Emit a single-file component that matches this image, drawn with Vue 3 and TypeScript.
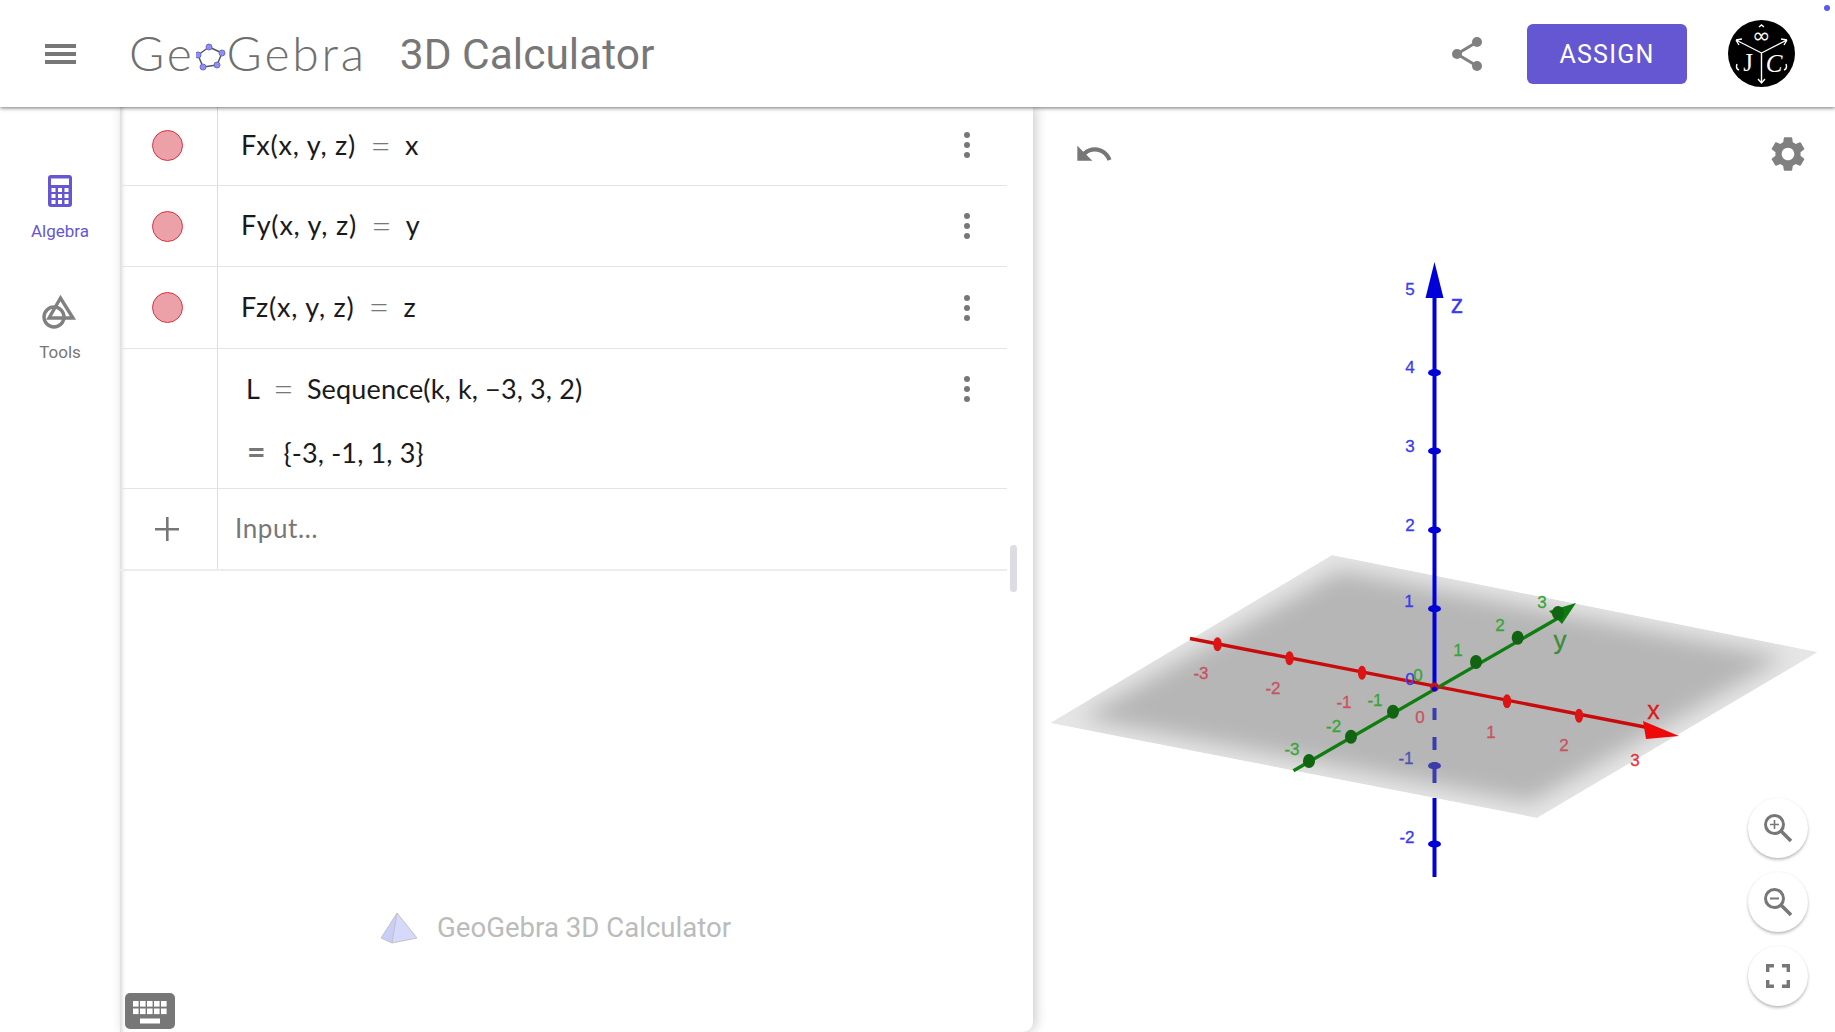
<template>
  <div class="app">
    <header class="topbar">
      <svg class="menu-icon" viewBox="0 0 31 20"><path d="M0 0h31v4H0zM0 8h31v4H0zM0 16h31v4H0z" /></svg>
      <div class="logo">
        <span>Ge</span>
        <svg class="logo-mark" viewBox="0 0 30 34">
          <polygon points="13,7 26,13 21,25 7,27 2,15" fill="none" stroke="#555" stroke-width="1.5" stroke-linejoin="round" />
          <circle v-for="(p, i) in logoDots" :key="i" :cx="p[0]" :cy="p[1]" r="3" fill="#8f8ff0" stroke="#6a6ad0" />
        </svg>
        <span>Gebra</span>
      </div>
      <div class="title">3D Calculator</div>
      <div class="spacer"></div>
      <svg class="share-icon" viewBox="0 0 30 34">
        <path d="M25 5 5 17l20 12" fill="none" stroke="#808080" stroke-width="3" />
        <circle cx="25" cy="5" r="5" /><circle cx="5" cy="17" r="5" /><circle cx="25" cy="29" r="5" />
      </svg>
      <button class="assign">ASSIGN</button>
      <svg class="avatar" viewBox="0 0 67 67">
        <circle cx="33.5" cy="33.5" r="33.5" fill="#000" />
        <path d="M33.5 33 8 20M33.5 33 59 20M33.5 33v30M8 20l6-1M8 20l3 5M59 20l-6-1M59 20l-3 5M30 59l3.5 4 3.5-4M31 7l2.5-2 2.5 2M9 44c-1 3-1 5 2 6M58 44c1 3 1 5-2 6" fill="none" stroke="#fff" stroke-width="1.4" />
        <text x="33.5" y="23" class="avatar-inf">∞</text>
        <text x="20" y="51" class="avatar-letter">J</text>
        <text x="46" y="52" class="avatar-letter italic">C</text>
      </svg>
      <i class="corner-dot"></i>
    </header>

    <div class="body">
      <nav class="sidebar">
        <div class="nav-item active">
          <svg class="calc-icon" viewBox="0 0 24 32">
            <rect width="24" height="32" rx="3" fill="#6557d2" />
            <rect x="3" y="3.5" width="18" height="6.5" fill="#fff" />
            <template v-for="r in 3" :key="r">
              <rect v-for="c in 3" :key="c" :x="c * 6.5 - 3" :y="r * 6 + 7" width="4" height="4" fill="#fff" />
            </template>
          </svg>
          <span>Algebra</span>
        </div>
        <div class="nav-item">
          <svg class="tools-icon" viewBox="0 0 40 40" fill="none" stroke="#808080" stroke-width="3.4">
            <polygon points="20.5,5 9,25 33,25" />
            <circle cx="14" cy="24" r="10" />
          </svg>
          <span>Tools</span>
        </div>
      </nav>

      <section class="algebra">
        <div class="list">
          <div v-for="row in rows" :key="row.name" class="row">
            <div class="marble-cell"><i class="marble"></i></div>
            <div class="math">
              {{ row.name }}<span class="eq">=</span>{{ row.value }}
            </div>
            <svg class="more" viewBox="0 0 6 26"><circle cx="3" cy="3" r="3" /><circle cx="3" cy="13" r="3" /><circle cx="3" cy="23" r="3" /></svg>
          </div>
          <div class="row row-tall">
            <div class="marble-cell"></div>
            <div class="math-tall">
              <div class="math-line">L<span class="eq">=</span>Sequence(k, k, −3, 3, 2)</div>
              <div class="math-line result"><span class="eq eq-bold">=</span>{-3, -1, 1, 3}</div>
            </div>
            <svg class="more more-tall" viewBox="0 0 6 26"><circle cx="3" cy="3" r="3" /><circle cx="3" cy="13" r="3" /><circle cx="3" cy="23" r="3" /></svg>
          </div>
          <div class="row row-input">
            <div class="marble-cell">
              <svg class="plus" viewBox="0 0 24 24"><path d="M11 0h2.6v11H24v2.6H13.6V24H11V13.6H0V11h11z" /></svg>
            </div>
            <div class="input-hint">Input…</div>
          </div>
        </div>
        <i class="scrollbar"></i>
        <div class="watermark">
          <svg class="pyramid" viewBox="0 0 36 32">
            <polygon points="16,1 0,26 11,31" fill="#c9cdf9" stroke="#c4c4c4" />
            <polygon points="16,1 36,26 11,31" fill="#d6d9fc" stroke="#c4c4c4" />
          </svg>
          <span>GeoGebra 3D Calculator</span>
        </div>
        <div class="keyboard">
          <svg viewBox="0 0 50 36" fill="#fff">
            <template v-for="y in [8, 15.5]" :key="y">
              <rect v-for="k in 5" :key="k" :x="1 + k * 7" :y="y" width="5.6" height="5.6" />
            </template>
            <rect x="15" y="25.5" width="20" height="5" />
          </svg>
        </div>
      </section>

      <main class="graphics">
        <svg class="plot" viewBox="1033 107 802 925">
          <defs>
            <clipPath id="plane-clip"><polygon points="1332,555 1818,652 1537,818 1050,723" /></clipPath>
            <filter id="plane-blur" x="-10%" y="-10%" width="120%" height="120%"><feGaussianBlur stdDeviation="11" /></filter>
          </defs>
          <g clip-path="url(#plane-clip)">
            <polygon points="1332,555 1818,652 1537,818 1050,723" fill="#e6e6e6" />
            <polygon points="1340,570 1785,657 1530,803 1080,718" fill="#b6b6b6" filter="url(#plane-blur)" />
          </g>
          <path d="M1434.5 687V798" stroke="#3c3cab" stroke-width="4" stroke-dasharray="0 21 12 17 13 12 21 12" fill="none" />
          <line x1="1190" y1="638.5" x2="1650" y2="728" stroke="#c80c0c" stroke-width="3.4" />
          <polygon points="1643,721 1646,739 1679,736" fill="#ee0808" />
          <ellipse v-for="(p, i) in xTicks" :key="i" :cx="p[0]" :cy="p[1]" rx="4.2" ry="7" fill="#dc1414" />
          <line x1="1293.5" y1="770.7" x2="1560" y2="617" stroke="#107d10" stroke-width="3.4" />
          <polygon points="1549,611 1562,624 1576,603" fill="#0f7a0f" />
          <ellipse v-for="(p, i) in yTicks" :key="i" :cx="p[0]" :cy="p[1]" rx="6" ry="7" fill="#116411" />
          <line x1="1434.5" y1="798" x2="1434.5" y2="877" stroke="#0000d8" stroke-width="4" />
          <line x1="1434.5" y1="295" x2="1434.5" y2="687" stroke="#0000d8" stroke-width="4" />
          <polygon points="1434.5,262 1425.5,298 1443.5,298" fill="#0000d8" />
          <ellipse v-for="y in zTicks" :key="y" cx="1434.5" :cy="y" rx="6.5" ry="3.6" :fill="y === 765.7 ? '#3c3cab' : '#0000d8'" />
          <circle cx="1434.5" cy="687" r="4.5" fill="#c01818" />
          <circle cx="1434.5" cy="689" r="2.5" fill="#0000d8" />
          <text v-for="l in labels" :key="l.x + ',' + l.y" :x="l.x" :y="l.y" :fill="l.color" :stroke="l.color" :font-size="l.size" class="plot-label">{{ l.text }}</text>
        </svg>

        <svg class="undo" viewBox="0 0 24 24"><path d="M12.5 8c-2.65 0-5.05.99-6.9 2.6L2 7v9h9l-3.62-3.62c1.39-1.16 3.16-1.88 5.12-1.88 3.54 0 6.55 2.31 7.6 5.5l2.37-.78C21.08 11.03 17.15 8 12.5 8z" /></svg>
        <svg class="gear" viewBox="0 0 24 24"><path d="M19.14 12.94c.04-.3.06-.61.06-.94 0-.32-.02-.64-.07-.94l2.03-1.58a.49.49 0 0 0 .12-.61l-1.92-3.32a.488.488 0 0 0-.59-.22l-2.39.96c-.5-.38-1.03-.7-1.62-.94l-.36-2.54a.484.484 0 0 0-.48-.41h-3.84c-.24 0-.43.17-.47.41l-.36 2.54c-.59.24-1.13.57-1.62.94l-2.39-.96c-.22-.08-.47 0-.59.22L2.74 8.87c-.12.21-.08.47.12.61l2.03 1.58c-.05.3-.09.63-.09.94s.02.64.07.94l-2.03 1.58a.49.49 0 0 0-.12.61l1.92 3.32c.12.22.37.29.59.22l2.39-.96c.5.38 1.03.7 1.62.94l.36 2.54c.05.24.24.41.48.41h3.84c.24 0 .44-.17.47-.41l.36-2.54c.59-.24 1.13-.56 1.62-.94l2.39.96c.22.08.47 0 .59-.22l1.92-3.32c.12-.22.07-.47-.12-.61l-2.01-1.58zM12 15.6c-1.98 0-3.6-1.62-3.6-3.6s1.62-3.6 3.6-3.6 3.6 1.62 3.6 3.6-1.62 3.6-3.6 3.6z" /></svg>

        <div class="zoom-buttons">
          <button class="round">
            <svg viewBox="0 0 30 30" fill="none" stroke="#777" stroke-width="3">
              <circle cx="11.5" cy="11.5" r="9" /><path d="M18 18l10 10" stroke-width="3.6" /><path d="M11.5 7v9M7 11.5h9" stroke-width="1.6" />
            </svg>
          </button>
          <button class="round">
            <svg viewBox="0 0 30 30" fill="none" stroke="#777" stroke-width="3">
              <circle cx="11.5" cy="11.5" r="9" /><path d="M18 18l10 10" stroke-width="3.6" /><path d="M7 11.5h9" stroke-width="2" />
            </svg>
          </button>
          <button class="round">
            <svg viewBox="0 0 24 24" fill="#777"><path d="M0 0h8v3.4H3.4V8H0zM16 0h8v8h-3.4V3.4H16zM0 16h3.4v4.6H8V24H0zM20.6 16H24v8h-8v-3.4h4.6z" /></svg>
          </button>
        </div>
      </main>
    </div>
  </div>
</template>

<script setup lang="ts">
interface PlotLabel {
  text: string;
  x: number;
  y: number;
  color: string;
  size: number;
}

const rows = [
  { name: 'Fx(x, y, z)', value: 'x' },
  { name: 'Fy(x, y, z)', value: 'y' },
  { name: 'Fz(x, y, z)', value: 'z' },
];

const logoDots = [
  [13, 7],
  [26, 13],
  [21, 25],
  [7, 27],
  [2, 15],
];

const xTicks = [
  [1217.5, 644.3],
  [1289.5, 658.3],
  [1362, 672.7],
  [1507, 701.3],
  [1579, 715.7],
];
const yTicks = [
  [1309, 761],
  [1351, 736.7],
  [1393, 711.7],
  [1476, 662],
  [1517.7, 637.7],
  [1558, 613],
];
const zTicks = [372.7, 451, 530, 608.7, 765.7, 844];

const RED = '#c9525f';
const GREEN = '#37a537';
const BLUE = '#3a3af0';

function mk(text: string, x: number, y: number, color: string, size = 17): PlotLabel {
  return { text, x, y, color, size };
}

const labels: PlotLabel[] = [
  mk('5', 1410, 289, BLUE),
  mk('4', 1410, 367, BLUE),
  mk('3', 1410, 446, BLUE),
  mk('2', 1410, 525, BLUE),
  mk('1', 1409, 601, BLUE),
  mk('0', 1410, 679, BLUE),
  mk('-1', 1406, 758, '#5050b8'),
  mk('-2', 1407, 837, BLUE),
  mk('z', 1457, 304, BLUE, 25),
  mk('-3', 1201, 673, RED),
  mk('-2', 1273, 688, RED),
  mk('-1', 1344, 702, RED),
  mk('0', 1420, 717, RED),
  mk('1', 1491, 732, RED),
  mk('2', 1564, 745, RED),
  mk('3', 1635, 760, '#e8303c'),
  mk('x', 1653.6, 710, '#e01818', 25),
  mk('-3', 1292, 749, GREEN),
  mk('-2', 1333.6, 726, GREEN),
  mk('-1', 1375, 700, GREEN),
  mk('0', 1418, 675, GREEN),
  mk('1', 1458, 650, GREEN),
  mk('2', 1500, 625, GREEN),
  mk('3', 1542, 602, GREEN),
  mk('y', 1560, 640, '#3c8c3c', 26),
];
</script>

<style>
html,
body {
  margin: 0;
  height: 100%;
  background: #fff;
  overflow: hidden;
}
</style>

<style scoped>
.app {
  width: 1835px;
  height: 1032px;
  display: flex;
  flex-direction: column;
  font-family: Roboto, "Liberation Sans", sans-serif;
  color: #777;
  overflow: hidden;
}

.topbar {
  position: relative;
  z-index: 3;
  flex: 0 0 107px;
  display: flex;
  align-items: center;
  background: #fff;
  box-shadow: 0 1px 4px rgba(0, 0, 0, 0.55);
}

.menu-icon {
  width: 31px;
  height: 20px;
  margin-left: 45px;
  fill: #777;
}

.logo {
  display: flex;
  align-items: center;
  margin: -2px 0 0 53px;
  font-family: Lato, sans-serif;
  font-weight: 300;
  font-size: 48px;
  letter-spacing: 2.8px;
  color: #6f6f6f;
}

.logo-mark {
  width: 30px;
  height: 34px;
  margin: 9px 1px 0 1px;
}

.title {
  margin: 2px 0 0 33px;
  font-size: 42.5px;
  color: #777;
}

.spacer {
  flex: 1;
}

.share-icon {
  width: 30px;
  height: 34px;
  fill: #808080;
}

.assign {
  width: 160px;
  height: 60px;
  margin-left: 45px;
  padding: 2px 0 0;
  border: 0;
  border-radius: 6px;
  background: #6557d2;
  color: #fff;
  font-family: Roboto, sans-serif;
  font-weight: 400;
  font-size: 25px;
  letter-spacing: 1.2px;
}

.avatar {
  width: 67px;
  height: 67px;
  margin-left: 41px;
  margin-right: 40px;
}

.avatar-inf {
  fill: #fff;
  font-size: 22px;
  text-anchor: middle;
  font-family: "DejaVu Sans", sans-serif;
}

.avatar-letter {
  fill: #fff;
  font-family: "Liberation Serif", serif;
  font-size: 25px;
  text-anchor: middle;
}

.italic {
  font-style: italic;
}

.corner-dot {
  position: absolute;
  right: 5px;
  top: 5px;
  width: 6px;
  height: 6px;
  border-radius: 50%;
  background: #5a5af0;
}

.body {
  flex: 1;
  display: flex;
  min-height: 0;
}

.sidebar {
  flex: 0 0 120px;
  display: flex;
  flex-direction: column;
  align-items: center;
  padding-top: 68px;
  gap: 52px;
  box-sizing: border-box;
}

.nav-item {
  display: flex;
  flex-direction: column;
  align-items: center;
  gap: 14px;
  font-size: 17px;
  color: #777;
}

.nav-item.active {
  color: #6557d2;
}

.calc-icon {
  width: 24px;
  height: 32px;
}

.tools-icon {
  width: 40px;
  height: 40px;
  margin-bottom: -5px;
}

.algebra {
  position: relative;
  z-index: 2;
  flex: 0 0 913px;
  box-sizing: border-box;
  padding-right: 26px;
  background: #fff;
  border-bottom-right-radius: 10px;
  box-shadow: 3px 0 12px rgba(0, 0, 0, 0.2), inset 5px 0 4px -3px rgba(0, 0, 0, 0.16);
}

.list {
  display: flex;
  flex-direction: column;
}

.row {
  display: flex;
  height: 81px;
  border-bottom: 1px solid #e4e4e4;
  box-sizing: border-box;
}

.row:nth-child(1) {
  height: 79px;
}

.row:nth-child(1) .more,
.row:nth-child(1) .marble {
  margin-bottom: 2px;
}

.row:nth-child(3) {
  height: 82px;
}

.row-tall {
  height: 140px;
}

.row.row-input {
  height: 82px;
  border-bottom: 2px solid #ececec;
}

.marble-cell {
  flex: 0 0 98px;
  display: flex;
  align-items: center;
  justify-content: center;
  padding-right: 3px;
  border-right: 1px solid #dcdcdc;
  box-sizing: border-box;
}

.marble {
  width: 31px;
  height: 31px;
  border-radius: 50%;
  background: #eca1a9;
  border: 1.5px solid #d8333f;
  box-sizing: border-box;
}

.math,
.math-line {
  font-family: Lato, "Open Sans", sans-serif;
  font-size: 27px;
  color: #1a1a1a;
  white-space: nowrap;
}

.math {
  flex: 1;
  display: flex;
  align-items: center;
  padding: 0 0 3px 23px;
  letter-spacing: 0.8px;
}

.eq {
  margin: 0 14px 0 14px;
  font-size: 36px;
  font-weight: 300;
  line-height: 1;
  color: #777;
  letter-spacing: 0;
}

.more {
  align-self: center;
  width: 6px;
  height: 26px;
  margin-right: 37px;
  fill: #777;
}

.more-tall {
  align-self: flex-start;
  margin-top: 27px;
}

.math-tall {
  flex: 1;
  display: flex;
  flex-direction: column;
  gap: 23px;
  padding: 19px 0 0 28px;
}

.math-line {
  line-height: 41px;
  letter-spacing: 0.15px;
}

.math-line .eq {
  margin: 0 13px;
  vertical-align: -3px;
}

.math-line.result .eq-bold {
  margin: 0 18px 0 1px;
  font-size: 32px;
  font-weight: 700;
  vertical-align: -1px;
}

.plus {
  width: 24px;
  height: 24px;
  fill: #777;
}

.input-hint {
  align-self: center;
  padding: 0 0 2px 17px;
  font-family: Lato, sans-serif;
  font-size: 26px;
  letter-spacing: 0.6px;
  color: #777;
}

.scrollbar {
  position: absolute;
  left: 890px;
  top: 438px;
  width: 7px;
  height: 47px;
  border-radius: 4px;
  background: #dcdce2;
}

.watermark {
  position: absolute;
  left: 261px;
  top: 804px;
  display: flex;
  align-items: center;
  gap: 20px;
  font-size: 27.6px;
  color: #bbb;
}

.pyramid {
  width: 36px;
  height: 32px;
}

.keyboard {
  position: absolute;
  left: 5px;
  bottom: 3px;
  width: 50px;
  height: 36px;
  border-radius: 5px;
  background: #777;
}

.keyboard svg {
  display: block;
  width: 50px;
  height: 36px;
}

.graphics {
  position: relative;
  flex: 1;
  min-width: 0;
}

.plot {
  display: block;
  width: 100%;
  height: 100%;
}

.plot-label {
  font-family: "Liberation Sans", sans-serif;
  text-anchor: middle;
  dominant-baseline: central;
  stroke-width: 0.3px;
}

.undo {
  position: absolute;
  left: 41px;
  top: 27px;
  width: 40px;
  height: 40px;
  fill: #777;
}

.gear {
  position: absolute;
  right: 26px;
  top: 26px;
  width: 42px;
  height: 42px;
  fill: #808080;
}

.zoom-buttons {
  position: absolute;
  right: 27px;
  bottom: 26px;
  display: flex;
  flex-direction: column;
  gap: 14px;
}

.round {
  width: 60px;
  height: 60px;
  padding: 0;
  border: 0;
  border-radius: 50%;
  background: #fff;
  box-shadow: 0 2px 3px rgba(0, 0, 0, 0.25), 0 0 2px rgba(0, 0, 0, 0.06);
  display: flex;
  align-items: center;
  justify-content: center;
}

.round svg {
  width: 30px;
  height: 30px;
}

.round:last-child svg {
  width: 24px;
  height: 24px;
}
</style>
